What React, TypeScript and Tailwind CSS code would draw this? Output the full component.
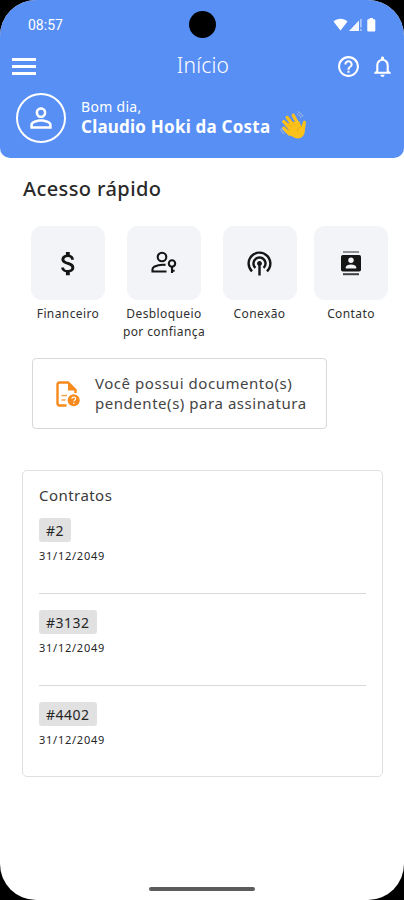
import type { ReactNode } from "react";
import {
  MdAttachMoney,
  MdHelpOutline,
  MdNotificationsNone,
  MdPersonOutline,
  MdPodcasts,
} from "react-icons/md";

function MenuBars() {
  return (
    <div className="flex h-[17px] w-[24px] flex-col justify-between">
      <span className="h-[3px] bg-white" />
      <span className="h-[3px] bg-white" />
      <span className="h-[3px] bg-white" />
    </div>
  );
}

function WaveHand() {
  return (
    <svg width="28" height="29" viewBox="0 0 28 29" fill="none" aria-hidden="true">
      <path
        d="M8.5 23.5 15 27c4 1.500 8-.5 9.500-4.500L26 11.500c.2-2-2.600-2.500-3.200-.5l-1.300 4.500L8 14Z"
        fill="#fcc21b"
      />
      <path d="M9.500 23 3.600 17.200M12 19 3.700 10.600M14.500 16 7.200 6.400M18.500 14 13.200 4.200" stroke="#fcc21b" strokeWidth="3.300" strokeLinecap="round" />
      <path d="M8 12 19 10l3 7-3 8-10-2Z" fill="#fcc21b" />
      <path d="m5.800 10.300 5.400 5.400M9.700 7.200l5 6.200M5.200 15.600l4.500 4.300M21.500 15.500c-3 .5-4.200 2.300-4 5" stroke="#e8a410" strokeWidth=".7" strokeLinecap="round" />
      <path d="M17.500 3c1.700.5 2.800 1.800 3.200 3.500M18 .9c2.500.5 4.200 2.300 4.700 4.400M.8 18c.2 2.200 1.300 4 3.200 4.700M2.500 17.500c.2 1.600 1 2.800 2.400 3.400" stroke="#a9bbd5" strokeWidth="1" strokeLinecap="round" />
    </svg>
  );
}

function StatusIcons() {
  return (
    <svg width="44" height="14" viewBox="0 0 44 14" fill="#fff" aria-hidden="true">
      <path d="M.5 3.400C4.500-.1 10.500-.1 14.500 3.400L7.500 12.500Z" />
      <path d="M16 13 26 2.500V13Z" opacity=".92" />
      <path d="M27.300 1v8.500h1.200V1ZM27.300 11v2h1.200v-2Z" opacity=".7" />
      <path d="M36.500 1.200V0h3.500v1.200h1.300q1 0 1 1v10.300q0 1-1 1h-6q-1 0-1-1V2.200q0-1 1-1Z" />
    </svg>
  );
}

function PersonKey() {
  return (
    <svg width="28" height="24" viewBox="0 0 28 24" fill="none" stroke="#151515" strokeWidth="2.100" aria-hidden="true">
      <circle cx="12" cy="6" r="4.300" />
      <path d="M16.500 20.500H2.500v-2.300c0-1 .6-1.900 1.500-2.400 3.800-1.800 7.400-2.500 11.500-1.900" />
      <circle cx="22" cy="12.500" r="3.200" />
      <path d="M22 15.500V22M22 19.700h2.600" />
    </svg>
  );
}

function ContactCard() {
  return (
    <svg width="22" height="26" viewBox="0 0 22 26" aria-hidden="true">
      <path d="M3 2h16" stroke="#8d8f91" strokeWidth="2.200" />
      <path d="M3 24.200h16" stroke="#3e3f41" strokeWidth="2" />
      <rect x="1" y="5" width="20" height="16.500" rx="1.800" fill="#151515" />
      <circle cx="11" cy="10.300" r="2.700" fill="#f2f4f7" />
      <path d="M5.800 18.500v-1.300c0-3.500 10.400-3.500 10.400 0v1.300Z" fill="#f2f4f7" />
    </svg>
  );
}

function PendingDocument() {
  return (
    <svg width="24" height="26" viewBox="0 0 24 26" fill="none" aria-hidden="true">
      <path d="M10.500 24.500H3.500q-2 0-2-2V3.500q0-2 2-2H12l7.500 7.500v3" stroke="#f78a1d" strokeWidth="2.400" />
      <path d="M12 1v8.500h8.500Z" fill="#f78a1d" />
      <path d="M5.500 14.500h5.500M5.500 19h4" stroke="#f9a34b" strokeWidth="1.500" />
      <circle cx="17.700" cy="19.200" r="6" fill="#f78a1d" />
      <path d="M15.900 17.800c0-2.400 3.700-2.300 3.700-.1 0 1.400-1.800 1.500-1.800 2.900M17.800 21.700v1.200" stroke="#fff" strokeWidth="1.200" />
    </svg>
  );
}

function QuickTile({ icon, children, className }: { icon: ReactNode; children: ReactNode; className: string }) {
  return (
    <div className={`flex flex-col items-center ${className}`}>
      <div className="flex h-[74px] w-[74px] items-center justify-center rounded-[11px] bg-[#f2f4f7] text-[#151515]">
        {icon}
      </div>
      <div className="mt-[5px] text-center text-[12px] leading-[18px] tracking-[0.4px] whitespace-nowrap text-[#303030]">{children}</div>
    </div>
  );
}

function Contract({ id }: { id: string }) {
  return (
    <div className="flex flex-col items-start">
      <div className="flex h-[24px] items-center rounded-[3px] bg-[#e1e1e1] px-[7px] text-[14px] tracking-[0.5px] text-[#262626]">
        {id}
      </div>
      <div className="mt-[6px] text-[11px] leading-4 tracking-[0.75px] text-[#262626]">31/12/2049</div>
    </div>
  );
}

export default function App() {
  return (
    <div className="h-[900px] w-[404px] overflow-hidden bg-black font-['Noto_Sans',sans-serif]">
      <div className="relative flex h-full flex-col overflow-hidden rounded-[36px] bg-white">
        <header className="h-[158px] shrink-0 rounded-b-[10px] bg-[#588ff5] text-white">
          <div className="flex h-[50px] items-center justify-between pr-[27px] pl-[28px]">
            <span className="font-['Roboto',sans-serif] text-[14px]">08:57</span>
            <StatusIcons />
          </div>
          <div className="flex h-[32px] items-center pr-[9px] pl-[12px]">
            <div className="flex w-[148px]">
              <MenuBars />
            </div>
            <div className="-mt-[1px] w-[86px] text-center text-[21px] font-light tracking-[0.2px]">Início</div>
            <div className="flex flex-1 items-center justify-end gap-[9px]">
              <MdHelpOutline size={25} />
              <MdNotificationsNone size={25} />
            </div>
          </div>
          <div className="flex items-center pt-[11px] pl-[16px]">
            <div className="flex h-[50px] w-[50px] items-center justify-center rounded-full border-2 border-white">
              <MdPersonOutline size={32} />
            </div>
            <div className="-mt-[3px] ml-[15px]">
              <div className="text-[14px] leading-5 tracking-[0.3px]">Bom dia,</div>
              <div className="text-[17px] leading-5 font-bold tracking-[0.22px] whitespace-nowrap">Claudio Hoki da Costa</div>
            </div>
            <div className="mt-[14px] ml-[10px]">
              <WaveHand />
            </div>
          </div>
        </header>
        <div className="absolute top-[11px] left-[189px] h-[27px] w-[27px] rounded-full bg-black" />

        <main className="flex-1">
          <h1 className="mt-[17px] ml-[23px] text-[20px] leading-7 font-medium tracking-[0.4px] text-[#2a2a2a]">Acesso rápido</h1>
          <div className="mt-[23px] flex h-[115px] pl-[22px]">
            <QuickTile className="w-[92px]" icon={<MdAttachMoney size={31} />}>
              Financeiro
            </QuickTile>
            <QuickTile className="w-[100px]" icon={<PersonKey />}>
              Desbloqueio
              <br />
              por confiança
            </QuickTile>
            <QuickTile className="w-[91px]" icon={<MdPodcasts size={29} />}>
              Conexão
            </QuickTile>
            <QuickTile className="w-[92px]" icon={<ContactCard />}>
              Contato
            </QuickTile>
          </div>

          <div className="mt-[17px] ml-[32px] flex h-[71px] w-[295px] items-center rounded-[4px] border border-[#d8d8d8] pl-[23px]">
            <PendingDocument />
            <p className="-mt-[2px] ml-[15px] text-[15px] leading-5 tracking-[0.54px] whitespace-nowrap text-[#444]">
              Você possui documento(s)
              <br />
              pendente(s) para assinatura
            </p>
          </div>

          <section className="mt-[41px] ml-[22px] h-[307px] w-[361px] rounded-[5px] border border-[#e0e0e0] px-[16px] pt-[14px]">
            <h2 className="text-[15px] leading-5 tracking-[0.45px] text-[#3a3a3a]">Contratos</h2>
            <div className="mt-[13px] h-[76px] border-b border-[#d9d9d9]">
              <Contract id="#2" />
            </div>
            <div className="mt-[16px] h-[76px] border-b border-[#d9d9d9]">
              <Contract id="#3132" />
            </div>
            <div className="mt-[16px]">
              <Contract id="#4402" />
            </div>
          </section>
        </main>
        <div className="mx-auto mb-[9px] h-[4px] w-[106px] rounded-full bg-[#5c5c5c]" />
      </div>
    </div>
  );
}
